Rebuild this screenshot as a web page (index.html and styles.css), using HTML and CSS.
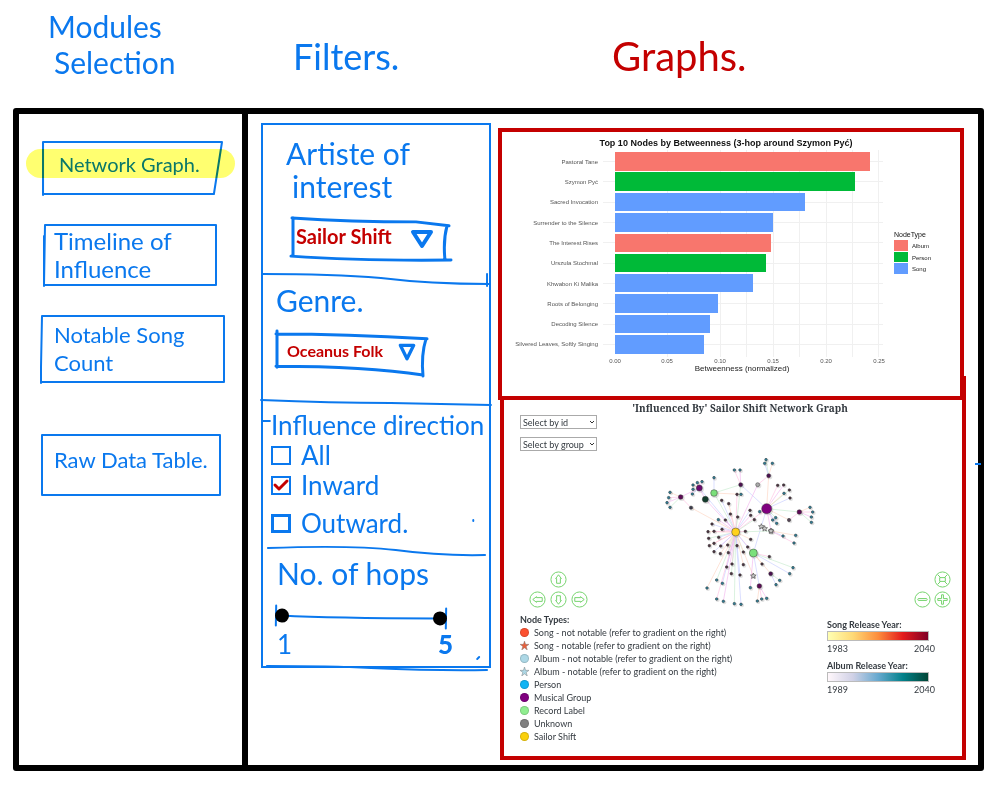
FILE: index.html
```html
<!DOCTYPE html>
<html lang="en">
<head>
<meta charset="utf-8">
<meta name="viewport" content="width=device-width, initial-scale=1">
<title>Network dashboard wireframe</title>
<link rel="stylesheet" href="styles.css">
</head>
<body>
<header class="headings">
  <h1 class="heading heading-modules">Modules<br><span class="indent">Selection</span></h1>
  <h1 class="heading heading-filters">Filters.</h1>
  <h1 class="heading heading-graphs">Graphs.</h1>
</header>

<main class="frame">
  <nav class="modules" aria-label="Modules">
    <button class="module module-network" type="button">
      <svg class="sketch" viewBox="0 0 180 54" preserveAspectRatio="none" aria-hidden="true"><path d="M2 1H179L171 53H2ZM2 44V54"/></svg>
      <span class="module-text">Network Graph.</span>
      <span class="highlight"></span>
    </button>
    <button class="module module-timeline" type="button">
      <svg class="sketch" viewBox="0 0 176 62" preserveAspectRatio="none" aria-hidden="true"><path d="M4 1H175V61H3L4 1M3 12V62"/></svg>
      <span class="module-text">Timeline of<br>Influence</span>
    </button>
    <button class="module module-songs" type="button">
      <svg class="sketch" viewBox="0 0 184 68" preserveAspectRatio="none" aria-hidden="true"><path d="M1 1H183V67H1M1 1L0 52V68"/></svg>
      <span class="module-text">Notable Song<br>Count</span>
    </button>
    <button class="module module-table" type="button">
      <svg class="sketch" viewBox="0 0 180 62" preserveAspectRatio="none" aria-hidden="true"><path d="M1 1H179V61H1Z"/></svg>
      <span class="module-text">Raw Data Table.</span>
    </button>
  </nav>

  <div class="workspace">
    <form class="filters">
      <section class="filter filter-artist">
        <label class="filter-title title-artist" for="artist">Artiste of<br><span class="indent">interest</span></label>
        <div class="picker picker-artist">
          <svg class="sketch heavy" viewBox="0 0 160 46" preserveAspectRatio="none" aria-hidden="true"><path d="M1 1Q60 5 125 5L158 9M2 1V40M0 40Q70 45 160 44M156 9Q152 24 154 44"/></svg>
          <select id="artist"><option>Sailor Shift</option></select>
          <svg class="caret" viewBox="0 0 24 20" aria-hidden="true"><path d="M3 3H21L12 17Z"/></svg>
        </div>
        <svg class="divider" viewBox="0 0 230 14" preserveAspectRatio="none" aria-hidden="true"><path d="M0 2Q70 2 120 6Q170 12 230 12M228 2V14"/></svg>
      </section>
      <section class="filter filter-genre">
        <label class="filter-title title-genre" for="genre">Genre.</label>
        <div class="picker picker-genre">
          <svg class="sketch heavy" viewBox="0 0 152 46" preserveAspectRatio="none" aria-hidden="true"><path d="M0 3Q70 3 151 8M1 0V37M0 36Q90 36 147 45M150 8Q145 24 147 46"/></svg>
          <select id="genre"><option>Oceanus Folk</option></select>
          <svg class="caret caret-small" viewBox="0 0 24 24" aria-hidden="true"><path d="M4 4H20L12 20Z"/></svg>
        </div>
        <svg class="divider" viewBox="0 0 230 14" preserveAspectRatio="none" aria-hidden="true"><path d="M-2 5Q70 8 130 8L232 10"/></svg>
      </section>
      <fieldset class="filter filter-direction">
        <legend class="filter-title title-direction">Influence direction</legend>
        <div class="choice"><input type="checkbox" id="all"><label for="all">All</label></div>
        <div class="choice">
          <input type="checkbox" id="inward" checked>
          <svg class="tick" viewBox="0 0 18 16" aria-hidden="true"><path d="M3 8L7 12L15 4"/></svg>
          <label for="inward">Inward</label>
        </div>
        <div class="choice choice-outward"><input type="checkbox" id="outward"><label for="outward">Outward.</label></div>
        <svg class="divider" viewBox="0 0 230 14" preserveAspectRatio="none" aria-hidden="true"><path d="M5 4Q90 1 135 6Q180 12 226 11M214 -24V-23M0 -123H7"/></svg>
      </fieldset>
      <section class="filter filter-hops">
        <h2 class="filter-title title-hops" id="hops">No. of hops</h2>
        <div class="range" role="group" aria-labelledby="hops">
          <svg class="range-line" viewBox="0 0 172 20" preserveAspectRatio="none" aria-hidden="true"><path d="M1 0V20M171 0V20M6 10Q60 12 168 10"/></svg>
          <input type="range" min="1" max="5" value="1" aria-label="Minimum hops">
          <input type="range" min="1" max="5" value="5" aria-label="Maximum hops">
        </div>
        <div class="range-labels"><span>1</span><strong>5</strong></div>
        <svg class="divider" viewBox="0 0 230 14" preserveAspectRatio="none" aria-hidden="true"><path d="M4 7Q70 7 110 9Q180 12 228 11M218 0L220 -2"/></svg>
      </section>
    </form>

    <div class="graphs">
      <section class="panel panel-bars">
        <svg class="bars" viewBox="502 132 458 264" role="img" aria-label="Top 10 nodes by betweenness">
          <g class="grid">
            <path d="M667.5 150V357M720.5 150V357M773.5 150V357M826.5 150V357M878.5 150V357M799.5 150V357M852.5 150V357M746.5 150V357M603 161.5H883M603 181.5H883M603 202.5H883M603 222.5H883M603 242.5H883M603 263.5H883M603 283.5H883M603 303.5H883M603 324.5H883M603 344.5H883"/>
          </g>
          <text class="chart-title" x="726" y="146">Top 10 Nodes by Betweenness (3-hop around Szymon Pyć)</text>
          <g class="album"><rect x="615" y="152" width="255" height="19"/><rect x="615" y="234" width="156" height="18"/><rect x="894" y="240" width="14" height="11"/></g>
          <g class="person"><rect x="615" y="172" width="240" height="19"/><rect x="615" y="254" width="151" height="18"/><rect x="894" y="252" width="14" height="10"/></g>
          <g class="song"><rect x="615" y="193" width="190" height="18"/><rect x="615" y="213" width="158" height="19"/><rect x="615" y="274" width="138" height="18"/><rect x="615" y="294" width="103" height="19"/><rect x="615" y="315" width="95" height="18"/><rect x="615" y="335" width="89" height="19"/><rect x="894" y="263" width="14" height="11"/></g>
          <g class="names">
            <text x="598" y="164">Pastoral Tane</text><text x="598" y="184">Szymon Pyć</text><text x="598" y="204">Sacred Invocation</text><text x="598" y="225">Surrender to the Silence</text><text x="598" y="245">The Interest Rises</text><text x="598" y="265">Urszula Stochmal</text><text x="598" y="286">Khwabon Ki Malika</text><text x="598" y="306">Roots of Belonging</text><text x="598" y="326">Decoding Silence</text><text x="598" y="346">Silvered Leaves, Softly Singing</text>
          </g>
          <g class="ticks"><text x="615" y="363">0.00</text><text x="667" y="363">0.05</text><text x="720" y="363">0.10</text><text x="773" y="363">0.15</text><text x="826" y="363">0.20</text><text x="879" y="363">0.25</text></g>
          <text class="axis" x="742" y="371">Betweenness (normalized)</text>
          <text class="key-title" x="894" y="237">NodeType</text>
          <g class="key"><text x="912" y="248">Album</text><text x="912" y="260">Person</text><text x="912" y="271">Song</text></g>
        </svg>
      </section>

      <section class="panel panel-network">
        <h2 class="network-title">'Influenced By' Sailor Shift Network Graph</h2>
        <div class="stage">
          <div class="stage-left">
            <div class="selects">
              <div class="select"><select aria-label="Select by id"><option>Select by id</option></select><svg viewBox="0 0 6 4" aria-hidden="true"><path d="M1 1L3 3L5 1"/></svg></div>
              <div class="select"><select aria-label="Select by group"><option>Select by group</option></select><svg viewBox="0 0 6 4" aria-hidden="true"><path d="M1 1L3 3L5 1"/></svg></div>
            </div>
            <div class="pan">
              <button class="round up" type="button" aria-label="Up"><svg viewBox="0 0 18 18"><circle cx="9" cy="9" r="8"/><path d="M9 4L12 8H11V13H7V8H6Z"/></svg></button>
              <button class="round" type="button" aria-label="Left"><svg viewBox="0 0 18 18"><circle cx="9" cy="9" r="8"/><path d="M4 9L8 6V7H14V11H8V12Z"/></svg></button>
              <button class="round" type="button" aria-label="Down"><svg viewBox="0 0 18 18"><circle cx="9" cy="9" r="8"/><path d="M9 14L12 10H11V5H7V10H6Z"/></svg></button>
              <button class="round" type="button" aria-label="Right"><svg viewBox="0 0 18 18"><circle cx="9" cy="9" r="8"/><path d="M14 9L10 6V7H4V11H10V12Z"/></svg></button>
            </div>
          </div>
          <svg class="network" id="network" viewBox="0 0 600 504" role="img" aria-label="Sailor Shift network"></svg>
          <div class="zoomers">
            <button class="round fit" type="button" aria-label="Fit"><svg viewBox="0 0 18 18"><circle cx="9" cy="9" r="8"/><path d="M6 7H12V11H6ZM4 4L7 7M14 4L11 7M4 14L7 11M14 14L11 11"/></svg></button>
            <button class="round" type="button" aria-label="Zoom out"><svg viewBox="0 0 18 18"><circle cx="9" cy="9" r="8"/><rect x="4" y="8" width="10" height="2" rx="1"/></svg></button>
            <button class="round" type="button" aria-label="Zoom in"><svg viewBox="0 0 18 18"><circle cx="9" cy="9" r="8"/><path d="M8 4H10V8H14V10H10V14H8V10H4V8H8Z"/></svg></button>
          </div>
        </div>
        <div class="legends">
          <div class="node-types">
            <h3>Node Types:</h3>
            <ul>
              <li><span class="dot tomato"></span>Song - not notable (refer to gradient on the right)</li>
              <li><svg class="star star-song" viewBox="0 0 10 10"><path d="M5 0L6.2 3.7H10L6.9 6L8.1 10L5 7.6L1.9 10L3.1 6L0 3.7H3.8Z"/></svg>Song - notable (refer to gradient on the right)</li>
              <li><span class="dot sky"></span>Album - not notable (refer to gradient on the right)</li>
              <li><svg class="star star-album" viewBox="0 0 10 10"><path d="M5 0L6.2 3.7H10L6.9 6L8.1 10L5 7.6L1.9 10L3.1 6L0 3.7H3.8Z"/></svg>Album - notable (refer to gradient on the right)</li>
              <li><span class="dot azure"></span>Person</li>
              <li><span class="dot purple"></span>Musical Group</li>
              <li><span class="dot mint"></span>Record Label</li>
              <li><span class="dot grey"></span>Unknown</li>
              <li><span class="dot gold"></span>Sailor Shift</li>
            </ul>
          </div>
          <div class="years">
            <h3>Song Release Year:</h3>
            <div class="ramp ramp-song"></div>
            <div class="span"><span>1983</span><span>2040</span></div>
            <h3>Album Release Year:</h3>
            <div class="ramp ramp-album"></div>
            <div class="span"><span>1989</span><span>2040</span></div>
          </div>
        </div>
      </section>
    </div>
  </div>
  <span class="stray"></span>
</main>
<script src="network.js"></script>
</body>
</html>
```
FILE: styles.css
```css
* { box-sizing: border-box; }

body {
  --ink: #0a78ee;
  --red: #c40000;
  margin: 0;
  background: #fff;
  color: var(--ink);
  font-family: Lato, "Open Sans", sans-serif;
}

h1, h2, h3, ul, fieldset, legend { margin: 0; padding: 0; font-weight: 400; }
button, select, input { font: inherit; color: inherit; margin: 0; }

/* Column headings */
.headings {
  display: grid;
  grid-template-columns: 248px 243fr 505fr;
  min-height: 108px;
}
.heading-modules { padding: 8px 0 0 48px; font-size: 30px; line-height: 36px; }
.heading-filters { padding: 36px 0 0 45px; font-size: 36px; line-height: 40px; }
.heading-graphs { padding: 32px 0 0 121px; font-size: 40px; line-height: 48px; color: var(--red); }
.indent { padding-left: 6px; }

.frame {
  position: relative;
  display: grid;
  grid-template-columns: 229px 1fr;
  margin: 0 12px 12px 13px;
  border: 6px solid #000;
  border-radius: 3px;
}
/* Pen mark on the right edge of the frame */
.stray {
  position: absolute;
  top: 349px;
  right: -3px;
  width: 6px;
  height: 2px;
  background: var(--ink);
}

/* Hand-drawn outlines */
.sketch, .divider, .range-line { position: absolute; overflow: visible; pointer-events: none; }
.sketch { inset: 0; width: 100%; height: 100%; }
.sketch path, .divider path, .range-line path {
  fill: none;
  stroke: var(--ink);
  stroke-width: 2;
  stroke-linecap: round;
  stroke-linejoin: round;
}
.heavy path { stroke-width: 3; }

/* Modules */
.modules {
  display: flex;
  flex-direction: column;
  align-items: flex-start;
  padding: 27px 12px 27px 22px;
  border-right: 6px solid #000;
}
.module {
  position: relative;
  padding: 0 0 0 13px;
  border: 0;
  background: none;
  text-align: left;
  font-size: 22px;
  line-height: 28px;
}
.module-network { width: 182px; height: 54px; padding: 0 0 8px 18px; margin-bottom: 29px; font-size: 20px; }
.module-timeline { width: 176px; height: 62px; margin-bottom: 29px; font-size: 24px; }
.module-songs { width: 184px; height: 68px; margin-bottom: 51px; }
.module-table { width: 180px; height: 62px; padding-bottom: 10px; }
.highlight {
  position: absolute;
  inset: 8px -12px 17px -15px;
  border-radius: 15px;
  background: #ffff70;
  mix-blend-mode: multiply;
}

.workspace {
  display: grid;
  grid-template-columns: 230fr 468fr;
  gap: 7px;
  align-items: start;
  padding: 9px 12px 5px 13px;
}

/* Filters */
.filters { border: 2px solid var(--ink); }
.filter { position: relative; border: 0; min-width: 0; }
.divider { left: 0; bottom: -7px; width: 100%; height: 14px; }
.filter-title { display: block; }
.filter-artist { padding: 12px 12px 17px 23px; }
.title-artist { font-size: 30px; line-height: 33px; }
.filter-genre { padding: 4px 12px 26px 13px; }
.title-genre { font-size: 30px; line-height: 34px; }
.filter-direction { padding: 8px 4px 13px 8px; }
.title-direction { float: left; width: 100%; font-size: 26px; line-height: 30px; white-space: nowrap; }
.filter-hops { padding: 4px 12px 7px 14px; }
.title-hops { font-size: 30px; line-height: 36px; }

.picker { position: relative; width: 160px; height: 45px; margin-top: 14px; color: var(--red); }
.picker-artist { margin-left: 5px; }
.picker-genre { width: 152px; }
.picker select {
  appearance: none;
  width: 100%;
  height: 38px;
  padding: 0 0 0 5px;
  border: 0;
  background: none;
  font-size: 20px;
  font-weight: 700;
}
.picker-genre select { padding: 0 0 0 11px; font-size: 16px; }
.caret { position: absolute; right: 17px; top: 12px; width: 24px; height: 20px; pointer-events: none; }
.caret path { fill: none; stroke: var(--ink); stroke-width: 4; stroke-linejoin: round; }
.caret-small { right: 11px; top: 11px; width: 20px; height: 20px; }

.choice {
  clear: both;
  position: relative;
  display: flex;
  align-items: center;
  gap: 10px;
  font-size: 26px;
  line-height: 30px;
}
.choice input {
  appearance: none;
  width: 20px;
  height: 19px;
  border: 2px solid var(--ink);
  background: #fff;
}
.choice-outward { margin-top: 8px; }
.choice-outward input { border-width: 3px; }
.tick { position: absolute; left: 1px; top: 7px; width: 18px; height: 16px; pointer-events: none; }
.tick path { fill: none; stroke: var(--red); stroke-width: 3; stroke-linecap: round; stroke-linejoin: round; }

.range { position: relative; width: 172px; height: 20px; margin-top: 16px; margin-left: -2px; transform: rotate(1deg); }
.range-line { inset: 0; width: 100%; height: 100%; }
.range input {
  position: absolute;
  inset: 0;
  width: 100%;
  height: 20px;
  appearance: none;
  background: none;
  pointer-events: none;
}
.range input::-webkit-slider-thumb {
  appearance: none;
  width: 14px;
  height: 14px;
  border-radius: 50%;
  background: #000;
  pointer-events: auto;
}
.range-labels {
  display: flex;
  justify-content: space-between;
  width: 176px;
  margin-top: 2px;
  font-size: 26px;
  line-height: 30px;
}
.range-labels strong { font-weight: 900; }

/* Graph panels */
.graphs { padding-top: 5px; }
.panel { border: 4px solid var(--red); }
.panel-bars { margin-right: 2px; }
.panel-network { position: relative; margin: -4px 0 0 2px; padding-bottom: 13px; color: #343a40; }
/* The right stroke starts a little above the panel's corner */
.panel-network::after {
  content: "";
  position: absolute;
  top: -24px;
  right: -4px;
  width: 4px;
  height: 24px;
  background: var(--red);
}

.bars { display: block; width: 100%; font-family: "Liberation Sans", Arial, sans-serif; }
.grid path { stroke: #f0f0f0; fill: none; }
.album { fill: #f8766d; }
.person { fill: #00ba38; }
.song { fill: #619cff; }
.chart-title { font-size: 9px; font-weight: 700; fill: #111; text-anchor: middle; }
.names { font-size: 6px; fill: #555; text-anchor: end; }
.ticks { font-size: 6px; fill: #555; text-anchor: middle; }
.axis { font-size: 8px; fill: #222; text-anchor: middle; }
.key-title { font-size: 7px; fill: #111; }
.key { font-size: 6px; fill: #222; }

.network-title {
  padding: 1px 0 0 14px;
  text-align: center;
  font-family: "Noto Serif", "Liberation Serif", serif;
  font-size: 10px;
  font-weight: 700;
  line-height: 14px;
}
.stage { display: grid; grid-template-columns: 136fr 200fr 122fr; }
.stage-left { display: flex; flex-direction: column; justify-content: space-between; padding-left: 16px; }
.selects { display: flex; flex-direction: column; align-items: flex-start; gap: 8px; }
.select { position: relative; display: flex; width: 77px; }
.select select {
  appearance: none;
  width: 100%;
  height: 14px;
  padding: 0 0 0 2px;
  border: 1px solid #aaa;
  border-radius: 0;
  background: #fff;
  font-size: 9px;
}
.select svg { position: absolute; right: 2px; top: 5px; width: 6px; height: 4px; fill: none; stroke: #333; pointer-events: none; }
.network { display: block; width: 100%; margin-top: 25px; }
.pan, .zoomers { display: grid; gap: 3px; }
.pan { grid-template-columns: repeat(3, 17px); column-gap: 4px; padding-left: 9px; }
.up { grid-column: 2; }
.up + .round { grid-column: 1; }
.zoomers { grid-template-columns: repeat(2, 17px); align-content: end; justify-content: end; padding-right: 11px; }
.fit { grid-column: 2; }
.round { width: 17px; height: 17px; padding: 0; border: 0; background: none; }
.round svg { display: block; width: 100%; height: 100%; fill: none; stroke: #6fd166; stroke-width: 1; }

.legends { display: flex; justify-content: space-between; padding: 6px 27px 0 16px; font-size: 9px; }
.legends h3 { font-size: 9px; font-weight: 700; line-height: 12px; }
.node-types li { display: flex; align-items: center; gap: 5px; line-height: 13px; }
.node-types ul { list-style: none; }
.dot { width: 9px; height: 9px; border-radius: 50%; box-shadow: inset 0 0 0 1px rgba(0, 0, 0, 0.15); }
.star { width: 9px; height: 9px; stroke: #777; stroke-width: 0.5; }
.star-song { fill: #e8603c; }
.star-album { fill: #add8e6; }
.tomato { background: #fc5130; }
.sky { background: #add8e6; }
.azure { background: #10b4f4; }
.purple { background: #800080; }
.mint { background: #90ee90; }
.grey { background: #808080; }
.gold { background: #fad00c; }

.years { width: 108px; padding-top: 5px; }
.ramp { width: 102px; height: 10px; border: 1px solid #bbb; }
.ramp-song { background: linear-gradient(90deg, #ffffb2, #fed976, #fd8d3c, #e31a1c, #800026); }
.ramp-album { background: linear-gradient(90deg, #fff7fb, #d0d1e6, #67a9cf, #02818a, #014636); }
.span { display: flex; justify-content: space-between; margin-bottom: 4px; line-height: 15px; }
```
FILE: network.js
```js
// Hubs: x, y, radius, fill
const hubs = {
  sailor: [287, 276, 12, '#ffd21c'],
  group: [380, 206, 15, '#800080'],
  labelA: [222, 159, 10, '#7be07b'],
  labelB: [340, 339, 12, '#7be07b'],
  west: [178, 144, 9, '#6a0a70'],
  forest: [196, 178, 9, '#123c2c'],
  farWest: [122, 171, 7, '#5c0a55'],
  southWest: [153, 203, 5, '#3a3a4a'],
  north: [302, 134, 6, '#4b1050'],
  northEast: [386, 107, 6, '#4b1050'],
  grey: [353, 134, 6, '#aaaaaa'],
  east: [478, 216, 7, '#5c0a55'],
  nearEast: [447, 240, 5, '#554455'],
  stars: [393, 273, 7, '#a0a0a0'],
  south: [358, 438, 7, '#5c0a55'],
  southEast: [392, 401, 6, '#4b1050']
};

const links = [
  ['sailor', 'group'], ['sailor', 'forest'], ['sailor', 'labelA'], ['sailor', 'west'], ['sailor', 'southWest'],
  ['farWest', 'southWest'], ['farWest', 'west'], ['labelA', 'north'], ['north', 'group'], ['northEast', 'group'],
  ['grey', 'northEast'], ['grey', 'sailor'], ['group', 'east'], ['group', 'labelB'], ['group', 'nearEast'],
  ['east', 'nearEast'], ['group', 'stars'], ['sailor', 'stars'], ['labelB', 'south'], ['labelB', 'southEast'],
  ['sailor', 'labelB'], ['west', 'forest'], ['sailor', 'north']
];

// Leaves grouped by the hub they hang from
const dark = '#4c3340';
const teal = '#2f7f98';
const leaves = [
  ['sailor', dark, [[245, 181], [266, 191], [271, 222], [256, 240], [293, 231], [216, 252], [204, 275], [222, 274], [246, 268], [206, 295], [236, 292], [208, 317], [222, 310], [242, 318], [263, 315], [222, 335], [241, 341], [265, 338], [291, 317], [310, 336], [323, 321], [332, 298], [316, 274], [332, 226], [343, 239], [330, 211], [310, 374], [276, 372], [260, 381], [274, 401], [300, 405], [340, 408], [291, 163]]],
  ['sailor', teal, [[235, 239], [230, 420], [247, 430], [201, 444], [230, 477], [250, 484], [283, 491], [303, 493]]],
  ['labelB', dark, [[366, 372], [388, 350]]],
  ['labelB', teal, [[331, 443], [459, 383], [449, 401]]],
  ['south', teal, [[352, 483], [365, 477], [380, 475]]],
  ['southEast', teal, [[419, 421], [408, 434]]],
  ['west', teal, [[159, 135], [172, 128], [186, 125], [159, 148], [157, 162]]],
  ['farWest', teal, [[90, 157], [86, 173], [81, 188], [90, 202]]],
  ['labelA', teal, [[222, 113], [303, 163]]],
  ['north', teal, [[283, 90], [300, 90]]],
  ['northEast', teal, [[378, 59], [374, 70], [397, 70]]],
  ['group', dark, [[413, 136], [431, 135], [448, 150], [450, 174]]],
  ['group', teal, [[432, 160], [359, 215], [398, 240], [407, 233], [410, 250]]],
  ['east', teal, [[510, 202], [518, 216], [514, 231], [514, 247]]],
  ['stars', teal, [[429, 288], [467, 286], [462, 309]]]
];
const starred = [[364, 260], [374, 266], [393, 273], [340, 408]];

const svg = document.getElementById('network');
const tints = ['#ffc2e2', '#f3b8ee', '#c9ecd0', '#c9cfff', '#fdd6c4'];
let count = 0;

function draw(name, attributes) {
  const node = document.createElementNS('http://www.w3.org/2000/svg', name);
  for (const key in attributes) node.setAttribute(key, attributes[key]);
  svg.appendChild(node);
}
function line(a, b) {
  draw('line', { x1: a[0], y1: a[1], x2: b[0], y2: b[1], stroke: tints[count++ % tints.length], 'stroke-width': 2 });
}
function circle(x, y, r, fill) {
  draw('circle', { cx: x + 3, cy: y + 3, r: r + 2, fill: '#000', 'fill-opacity': 0.12 });
  draw('circle', { cx: x, cy: y, r: r, fill: fill, stroke: '#333', 'stroke-opacity': 0.7, 'stroke-width': 2 });
}
function star(x, y) {
  const points = [];
  for (let i = 0; i < 10; i++) {
    const r = i % 2 ? 4 : 9;
    const angle = Math.PI * (i / 5 - 0.5);
    points.push(x + r * Math.cos(angle) + ',' + (y + r * Math.sin(angle)));
  }
  draw('polygon', { points: points.join(' '), fill: '#c9c9c9', stroke: '#555', 'stroke-width': 2 });
}

links.forEach(([a, b]) => line(hubs[a], hubs[b]));
leaves.forEach(([hub, , points]) => points.forEach(point => line(hubs[hub], point)));
leaves.forEach(([, fill, points]) => points.forEach(([x, y]) => circle(x, y, 4, fill)));
Object.values(hubs).forEach(([x, y, r, fill]) => circle(x, y, r, fill));
starred.forEach(([x, y]) => star(x, y));
```
